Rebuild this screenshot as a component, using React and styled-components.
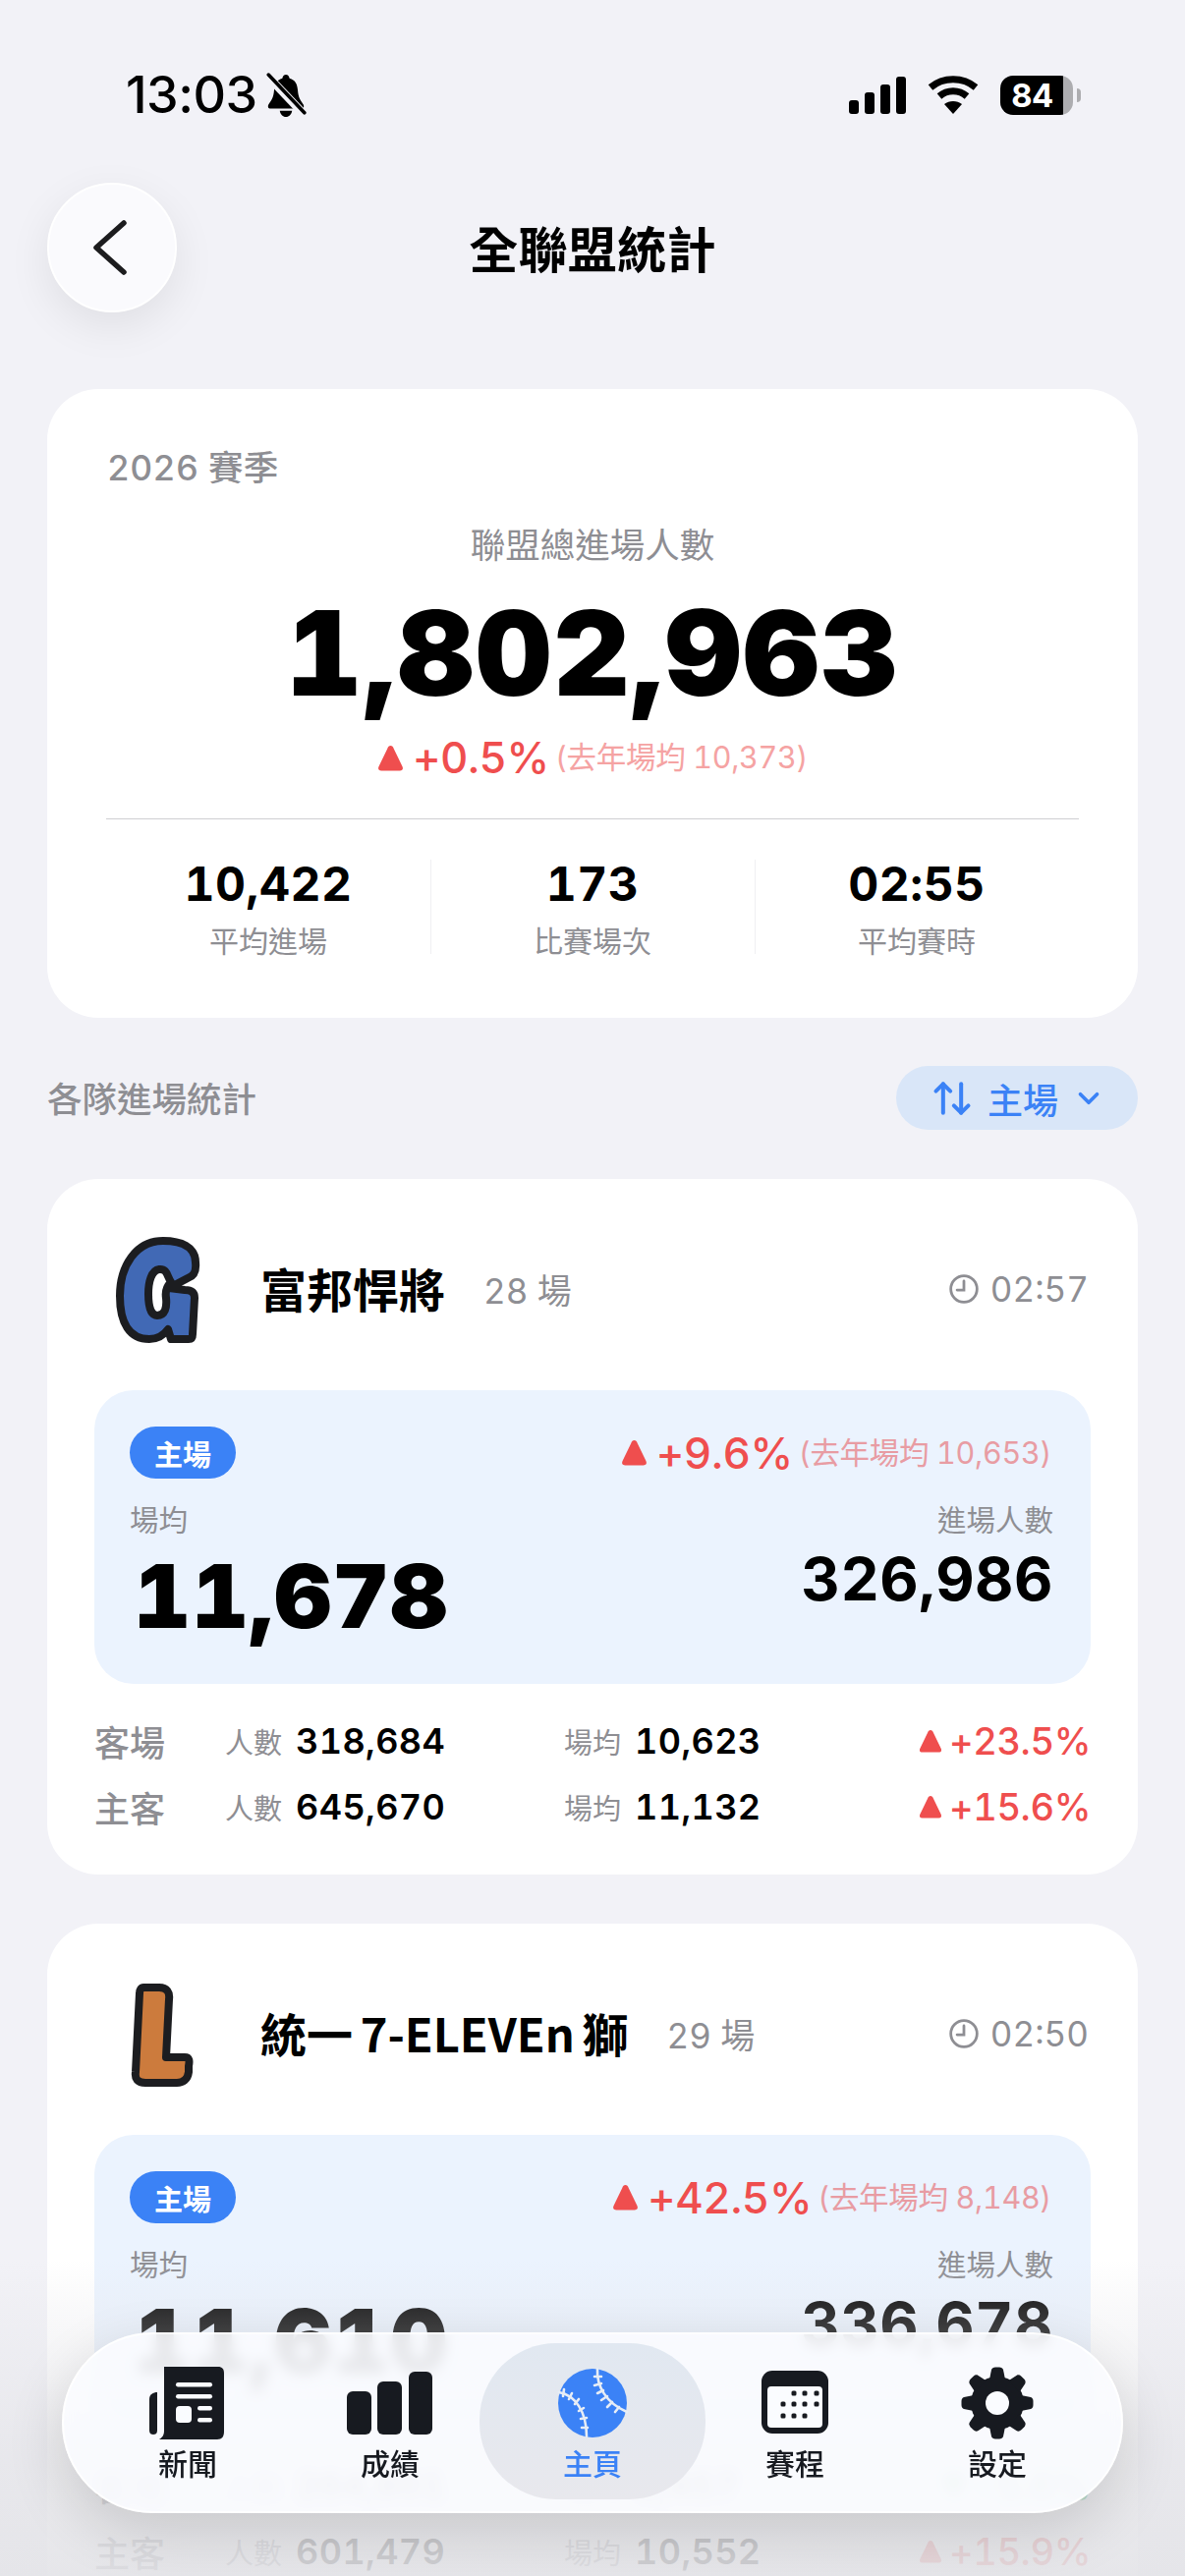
import React from "react";
import styled, { createGlobalStyle } from "styled-components";
import { ArrowUpDown, ChevronDown } from "lucide-react";

const FONT = `Inter, "Noto Sans CJK TC", "Noto Sans", sans-serif`;
const CJK = `"Noto Sans CJK TC", Inter, sans-serif`;
const GRAY = "#8e8e93";
const RED = "#ef4e4e";
const GREEN = "#34c759";
const DARK = "#171a20";
const BLUE = "#3b82f6";

const Global = createGlobalStyle`
  html, body { margin: 0; padding: 0; background: #f2f2f7; }
  * { box-sizing: border-box; }
`;

const Page = styled.div`
  position: relative;
  width: 1206px;
  height: 2622px;
  overflow: hidden;
  background: #f2f2f7;
  font-family: ${FONT};
  font-variant-numeric: tabular-nums;
  color: #000;
`;
const Scroll = styled.div`
  padding: 0 48px;
`;
const StatusBar = styled.div`
  height: 74px;
  margin: 60px 0 52px;
  padding: 0 58px 0 80px;
  display: flex;
  align-items: center;
  justify-content: space-between;
`;
const Cluster = styled.div`
  display: flex;
  align-items: center;
  gap: ${(p) => p.$gap}px;
`;
const Clock = styled.span`
  font-size: 52px;
  font-weight: 500;
  font-variant-numeric: normal;
  line-height: 74px;
  letter-spacing: -0.5px;
`;
const Battery = styled.div`
  position: relative;
  width: 74px;
  height: 40px;
  border-radius: 13px;
  background: linear-gradient(90deg, #000 0 86%, #adadb0 86% 100%);
  display: flex;
  align-items: center;
  justify-content: center;
  padding-right: 9px;
  color: #fff;
  font-size: 33px;
  font-weight: 700;
  margin-right: 8px;
  &::after {
    content: "";
    position: absolute;
    right: -8px;
    top: 13px;
    width: 4px;
    height: 14px;
    border-radius: 0 4px 4px 0;
    background: #adadb0;
  }
`;
const Header = styled.header`
  display: grid;
  grid-template-columns: 132px 1fr 132px;
  align-items: center;
  height: 132px;
  margin-bottom: 78px;
`;
const BackButton = styled.button`
  width: 132px;
  height: 132px;
  border-radius: 50%;
  border: 2px solid #fff;
  background: #fafafd;
  box-shadow: 0 14px 44px rgba(0, 0, 0, 0.08);
  display: flex;
  align-items: center;
  justify-content: center;
  padding: 0 4px 0 0;
`;
const Title = styled.h1`
  margin: -2px 0 0;
  text-align: center;
  font-family: ${CJK};
  font-size: 50px;
  font-weight: 700;
  line-height: 60px;
  letter-spacing: 0.3px;
`;
const Card = styled.section`
  background: #fff;
  border-radius: 52px;
`;
const SummaryCard = styled(Card)`
  height: 640px;
  padding: 60px 60px 0;
`;
const Season = styled.div`
  font-size: 35.5px;
  font-weight: 500;
  line-height: 42px;
  color: ${GRAY};
  padding-left: 1px;
  letter-spacing: 0.3px;
`;
const HeroLabel = styled.div`
  margin-top: 37px;
  text-align: center;
  font-size: 35.5px;
  line-height: 42px;
  color: ${GRAY};
`;
const HeroNumber = styled.div`
  margin-top: 28px;
  text-align: center;
  font-size: 120px;
  font-weight: 900;
  line-height: 120px;
  letter-spacing: 2px;
`;
const DeltaLine = styled.div`
  display: flex;
  align-items: center;
  justify-content: ${(p) => p.$align || "center"};
  gap: ${(p) => p.$gap ?? 6}px;
  line-height: 50px;
`;
const HeroDelta = styled(DeltaLine)`
  margin-top: 21px;
`;
const Change = styled.span`
  font-size: ${(p) => p.$size}px;
  font-weight: 500;
  color: ${(p) => p.$color || RED};
  margin-left: 3px;
  letter-spacing: -0.4px;
`;
const LastYear = styled.span`
  font-size: 30.5px;
  letter-spacing: -0.3px;
  color: ${(p) => p.$color};
`;
const Divider = styled.div`
  height: 1px;
  margin-top: 37px;
  background: #cfcfd2;
`;
const Stats = styled.div`
  margin-top: 38px;
  display: grid;
  grid-template-columns: repeat(3, 1fr);
`;
const Stat = styled.div`
  text-align: center;
  position: relative;
  & + &::before {
    content: "";
    position: absolute;
    left: 0;
    top: 3px;
    height: 96px;
    width: 1px;
    background: #f0f0f2;
  }
`;
const StatValue = styled.div`
  font-size: 48px;
  font-weight: 700;
  line-height: 56px;
  letter-spacing: 0.5px;
`;
const StatLabel = styled.div`
  margin-top: 8px;
  font-size: 30px;
  line-height: 44px;
  color: ${GRAY};
`;
const SectionHead = styled.div`
  margin: 49px 0 50px;
  height: 65px;
  display: flex;
  align-items: center;
  justify-content: space-between;
`;
const SectionTitle = styled.h2`
  margin: -2px 0 0;
  font-size: 35.5px;
  font-weight: 500;
  color: ${GRAY};
`;
const SortPill = styled.button`
  width: 246px;
  height: 65px;
  border: 0;
  border-radius: 33px;
  background: #d9e6f8;
  color: ${BLUE};
  font-family: ${CJK};
  font-size: 36px;
  font-weight: 500;
  display: flex;
  align-items: center;
  justify-content: center;
  gap: 14px;
  padding: 0 0 0 2px;
`;
const TeamCard = styled(Card)`
  padding: 0 48px 36px;
  margin-bottom: 50px;
`;
const TeamHead = styled.div`
  margin: 0 0 44px;
  padding-top: 55px;
  height: 171px;
  display: flex;
  align-items: center;
`;
const Logo = styled.svg`
  width: 169px;
  height: 116px;
  flex: none;
`;
const TeamName = styled.div`
  font-family: ${CJK};
  font-size: 47px;
  font-weight: 700;
  word-spacing: -3px;
  margin-top: -5px;
`;
const Games = styled.div`
  margin: -3px 0 0 39px;
  font-size: 35px;
  color: ${GRAY};
`;
const Duration = styled.div`
  margin: -3px 0 0 auto;
  display: flex;
  align-items: center;
  gap: 11px;
  font-size: 35px;
  color: ${GRAY};
  padding-right: 2px;
`;
const HomeBox = styled.div`
  height: 299px;
  padding: 37px 40px 0 36px;
  border-radius: 40px;
  background: #ebf3fe;
`;
const BoxTop = styled.div`
  height: 53px;
  display: flex;
  align-items: center;
  justify-content: space-between;
`;
const Badge = styled.span`
  width: 108px;
  height: 53px;
  border-radius: 27px;
  background: ${BLUE};
  color: #fff;
  font-family: ${CJK};
  font-size: 29px;
  font-weight: 700;
  display: flex;
  align-items: center;
  justify-content: center;
`;
const BoxBody = styled.div`
  margin: 22px -2px 0 0;
  display: flex;
  justify-content: space-between;
`;
const BoxCol = styled.div`
  text-align: ${(p) => p.$align};
`;
const BoxLabel = styled.div`
  font-size: 29.5px;
  line-height: 40px;
  color: ${GRAY};
`;
const BigNumber = styled.div`
  margin: 13px 0 0 4px;
  font-size: 90px;
  font-weight: 900;
  line-height: 90px;
  letter-spacing: 1px;
`;
const SideNumber = styled.div`
  margin-top: 9px;
  font-size: 61px;
  font-weight: 700;
  line-height: 62px;
  letter-spacing: 0.5px;
`;
const Rows = styled.div`
  margin-top: 24px;
`;
const SplitRow = styled.div`
  height: 67px;
  display: grid;
  grid-template-columns: 133px 345px 1fr auto;
  align-items: center;
`;
const RowName = styled.span`
  font-size: 36px;
  font-weight: 500;
  color: ${GRAY};
`;
const Metric = styled.span`
  display: flex;
  align-items: center;
  gap: 14px;
`;
const MetricLabel = styled.span`
  font-size: 29px;
  color: ${GRAY};
`;
const MetricValue = styled.span`
  font-size: 36px;
  font-weight: 600;
  letter-spacing: 0.4px;
`;
const Fade = styled.div`
  position: absolute;
  left: 0;
  right: 0;
  bottom: 0;
  height: 322px;
  pointer-events: none;
  background: linear-gradient(
    180deg,
    rgba(228, 228, 232, 0) 0%,
    rgba(228, 228, 232, 0.2) 15%,
    rgba(228, 228, 232, 0.7) 60%,
    rgba(228, 228, 232, 0.88) 90%,
    rgba(228, 228, 232, 0.92) 100%
  );
`;
const Nav = styled.nav`
  position: absolute;
  left: 63px;
  top: 2374px;
  width: 1080px;
  height: 184px;
  padding: 11px 23px 12px;
  border-radius: 92px;
  border: 2px solid rgba(255, 255, 255, 0.9);
  background: rgba(250, 252, 255, 0.88);
  backdrop-filter: blur(7px);
  box-shadow: 0 20px 60px rgba(0, 0, 0, 0.14);
  display: grid;
  grid-template-columns: repeat(5, 1fr);
`;
const NavItem = styled.div`
  position: relative;
  padding-top: 21px;
  display: flex;
  flex-direction: column;
  align-items: center;
  color: ${(p) => (p.$active ? BLUE : DARK)};
  ${(p) =>
    p.$active &&
    `&::before {
      content: "";
      position: absolute;
      inset: -2px -12px 0;
      border-radius: 78px;
      background: linear-gradient(180deg, #e1e8f1, #e8e8ed);
    }`}
`;
const NavIcon = styled.svg`
  position: relative;
  height: 76px;
  width: 100px;
`;
const NavLabel = styled.span`
  position: relative;
  margin-top: 2px;
  font-family: ${CJK};
  font-size: 30px;
  font-weight: 500;
  line-height: 40px;
`;

const Triangle = ({ size }) => (
  <svg width={size} height={size} viewBox="0 0 26 26" style={{ flex: "none" }}>
    <path d="M13 1C14.5 1 15.5 2 16.2 4L24.6 21.5C25.6 24 24.6 25.5 22 25.5H4C1.4 25.5.4 24 1.4 21.5L9.8 4C10.5 2 11.5 1 13 1Z" fill={RED} />
  </svg>
);
const DownTriangle = ({ size }) => (
  <svg width={size} height={size} viewBox="0 0 26 26" style={{ flex: "none" }}>
    <path d="M13 25C14.5 25 15.5 24 16.2 22L24.6 4.5C25.6 2 24.6.5 22 .5H4C1.4.5.4 2 1.4 4.5L9.8 22C10.5 24 11.5 25 13 25Z" fill={GREEN} />
  </svg>
);
const ClockIcon = () => (
  <svg width="32" height="32" viewBox="0 0 30 30" fill="none" stroke={GRAY} strokeWidth="2.6" strokeLinecap="round">
    <circle cx="15" cy="15" r="12.5" />
    <path d="M15 7.5V16H8.5" />
  </svg>
);

const GLogo = () => (
  <Logo viewBox="0 0 169 116">
    <path
      fillRule="evenodd"
      fill="#4169b5"
      stroke="#1c1d20"
      strokeWidth="8"
      strokeLinejoin="round"
      d="M103 30C103 14 88 8 70 8C42 8 26 34 26 64C26 92 36 108 56 108C64 108 70 105 75 98L78 108H96C99 108 100 106 100 103L102 66C102 60 98 58 92 58L76 56L95 46C101 44 104 40 103 30ZM66 37C58 38 55 50 55 62C55 76 58 84 64 84C72 84 74 76 73 66C72 60 74 54 78 50C74 44 74 36 66 37Z"
    />
  </Logo>
);
const LLogo = () => (
  <Logo viewBox="0 0 169 116">
    <path
      fill="#cc7b3d"
      stroke="#1c1d20"
      strokeWidth="8"
      strokeLinejoin="round"
      d="M50 10H66C74 10 77 15 76 22L73 81H92C97 81 97 85 96 90V96C95 104 90 107 84 107H52C44 107 41 103 42 96L46 16C46 12 48 10 50 10Z"
    />
  </Logo>
);

const NewsIcon = () => (
  <NavIcon viewBox="0 0 100 76">
    <path fill={DARK} d="M26 1H81C85 1 87 3 87 8V67C87 72 85 75 80 75H21C24 73 26 71 26 66V1Z" />
    <path fill={DARK} d="M11 34C11 29 15 27 19 27V66C19 69 17 70 15 70C13 70 11 69 11 66Z" />
    <g fill="#fafcff">
      <rect x="38" y="17" width="37" height="4.5" rx="2.2" />
      <rect x="38" y="29" width="37" height="4.5" rx="2.2" />
      <rect x="38" y="41" width="16" height="17" rx="4" />
      <rect x="60" y="41" width="15" height="4.5" rx="2.2" />
      <rect x="60" y="53" width="15" height="4.5" rx="2.2" />
    </g>
  </NavIcon>
);
const BarsIcon = () => (
  <NavIcon viewBox="0 0 100 76">
    <g fill={DARK}>
      <rect x="6" y="26" width="25" height="44" rx="6" />
      <rect x="37" y="16" width="25" height="54" rx="6" />
      <rect x="69" y="6" width="24" height="64" rx="6" />
    </g>
  </NavIcon>
);
const BallIcon = () => (
  <NavIcon viewBox="0 0 100 76">
    <circle cx="50" cy="38" r="35" fill={BLUE} />
    <g fill="none" stroke="#e6edf6" strokeWidth="2.6" strokeLinecap="round">
      <path d="M16 27C32 30 44 46 44 72" />
      <path d="M55 3C54 21 64 38 85 47" />
      <path d="M21 24L20 31M29 28L26 34M36 34L32 39M41 43L36 46M44 53L38 54M45 63L39 63" />
      <path d="M52 11L59 11M52 20L59 18M55 28L61 25M59 35L65 31M65 42L70 37M73 47L77 42" />
    </g>
  </NavIcon>
);
const CalendarIcon = () => (
  <NavIcon viewBox="0 0 100 76">
    <rect x="16" y="5" width="68" height="64" rx="11" fill={DARK} />
    <rect x="22" y="21" width="56" height="42" rx="4" fill="#fafcff" />
    <g fill={DARK}>
      {[
        [49, 28], [60, 28], [72, 28],
        [38, 39], [49, 39], [60, 39], [72, 39],
        [38, 51], [49, 51], [60, 51],
      ].map(([cx, cy]) => (
        <rect key={`${cx}-${cy}`} x={cx - 2.5} y={cy - 2.5} width="5" height="5" rx="1.5" />
      ))}
    </g>
  </NavIcon>
);
const GearIcon = () => (
  <NavIcon viewBox="0 0 100 76">
    <g fill={DARK}>
      <circle cx="50" cy="38" r="27" />
      {[0, 45, 90, 135, 180, 225, 270, 315].map((a) => (
        <path key={a} d="M42 14L44 4C44.5 2.5 46 1.5 48 1.5H52C54 1.5 55.5 2.5 56 4L58 14Z" transform={`rotate(${a} 50 38)`} />
      ))}
    </g>
    <circle cx="50" cy="38" r="12" fill="#fafcff" />
  </NavIcon>
);

const teams = [
  {
    id: "g", Logo: GLogo, name: "富邦悍將", games: "28 場", time: "02:57",
    change: "+9.6%", last: "(去年場均 10,653)", avg: "11,678", total: "326,986",
    rows: [
      { name: "客場", total: "318,684", avg: "10,623", change: "+23.5%" },
      { name: "主客", total: "645,670", avg: "11,132", change: "+15.6%" },
    ],
  },
  {
    id: "l", Logo: LLogo, name: "統一 7-ELEVEn 獅", games: "29 場", time: "02:50",
    change: "+42.5%", last: "(去年場均 8,148)", avg: "11,610", total: "336,678",
    rows: [
      { name: "客場", total: "264,801", avg: "9,457", change: "-5.6%", down: true },
      { name: "主客", total: "601,479", avg: "10,552", change: "+15.9%" },
    ],
  },
];

const navItems = [
  { label: "新聞", Icon: NewsIcon },
  { label: "成績", Icon: BarsIcon },
  { label: "主頁", Icon: BallIcon, active: true },
  { label: "賽程", Icon: CalendarIcon },
  { label: "設定", Icon: GearIcon },
];

export default function App() {
  return (
    <Page>
      <Global />
      <Scroll>
        <StatusBar>
          <Cluster $gap={8}>
            <Clock>13:03</Clock>
            <svg width="42" height="46" viewBox="0 0 40 44">
              <path fill="#000" d="M20 2C22 2 23 3.5 23.5 5.5C29 7 31 11 31.5 17C32 24 34 27 37 31C38 33 37 35 35 35H5C3 35 2 33 3 31C6 27 8 24 8.5 17C9 11 11 7 16.5 5.5C17 3.5 18 2 20 2ZM14 37H26C25.5 40.5 23 43 20 43C17 43 14.5 40.5 14 37Z" />
              <path stroke="#f2f2f7" strokeWidth="8" d="M2 3L38 41" />
              <path stroke="#000" strokeWidth="3.4" strokeLinecap="round" d="M3 2L38 39" />
            </svg>
          </Cluster>
          <Cluster $gap={22}>
            <svg width="58" height="38" viewBox="0 0 58 38">
              <g fill="#000">
                <rect x="0" y="24" width="10" height="14" rx="3" />
                <rect x="16" y="16" width="10" height="22" rx="3" />
                <rect x="32" y="8" width="10" height="30" rx="3" />
                <rect x="48" y="0" width="10" height="38" rx="3" />
              </g>
            </svg>
            <svg width="52" height="40" viewBox="0 0 52 40" fill="none" stroke="#000" strokeWidth="7">
              <path d="M3 12C16 1 36 1 49 12" />
              <path d="M12 21C20 14 32 14 40 21" />
              <path fill="#000" stroke="none" d="M26 39L17 29C22 25 30 25 35 29Z" />
            </svg>
            <Battery>84</Battery>
          </Cluster>
        </StatusBar>
        <Header>
          <BackButton aria-label="返回">
            <svg width="36" height="56" viewBox="0 0 36 56" fill="none" stroke="#1c1c1e" strokeWidth="5.5" strokeLinecap="round" strokeLinejoin="round">
              <path d="M32 3L4 28L32 53" />
            </svg>
          </BackButton>
          <Title>全聯盟統計</Title>
          <span />
        </Header>
        <SummaryCard>
          <Season>2026 賽季</Season>
          <HeroLabel>聯盟總進場人數</HeroLabel>
          <HeroNumber>1,802,963</HeroNumber>
          <HeroDelta>
            <Triangle size={27} />
            <Change $size={44}>+0.5%</Change>
            <LastYear $color="#f5a3a3">(去年場均 10,373)</LastYear>
          </HeroDelta>
          <Divider />
          <Stats>
            <Stat>
              <StatValue>10,422</StatValue>
              <StatLabel>平均進場</StatLabel>
            </Stat>
            <Stat>
              <StatValue>173</StatValue>
              <StatLabel>比賽場次</StatLabel>
            </Stat>
            <Stat>
              <StatValue>02:55</StatValue>
              <StatLabel>平均賽時</StatLabel>
            </Stat>
          </Stats>
        </SummaryCard>
        <SectionHead>
          <SectionTitle>各隊進場統計</SectionTitle>
          <SortPill>
            <ArrowUpDown size={44} strokeWidth={2.2} />
            主場
            <ChevronDown size={34} strokeWidth={2.6} />
          </SortPill>
        </SectionHead>
        {teams.map((t) => (
          <TeamCard key={t.id}>
            <TeamHead>
              <t.Logo />
              <TeamName>{t.name}</TeamName>
              <Games>{t.games}</Games>
              <Duration>
                <ClockIcon />
                {t.time}
              </Duration>
            </TeamHead>
            <HomeBox>
              <BoxTop>
                <Badge>主場</Badge>
                <DeltaLine>
                  <Triangle size={27} />
                  <Change $size={44}>{t.change}</Change>
                  <LastYear $color="#e89ca3">{t.last}</LastYear>
                </DeltaLine>
              </BoxTop>
              <BoxBody>
                <BoxCol $align="left">
                  <BoxLabel>場均</BoxLabel>
                  <BigNumber>{t.avg}</BigNumber>
                </BoxCol>
                <BoxCol $align="right">
                  <BoxLabel>進場人數</BoxLabel>
                  <SideNumber>{t.total}</SideNumber>
                </BoxCol>
              </BoxBody>
            </HomeBox>
            <Rows>
              {t.rows.map((r) => (
                <SplitRow key={r.name}>
                  <RowName>{r.name}</RowName>
                  <Metric>
                    <MetricLabel>人數</MetricLabel>
                    <MetricValue>{r.total}</MetricValue>
                  </Metric>
                  <Metric>
                    <MetricLabel>場均</MetricLabel>
                    <MetricValue>{r.avg}</MetricValue>
                  </Metric>
                  <DeltaLine $gap={4}>
                    {r.down ? <DownTriangle size={24} /> : <Triangle size={24} />}
                    <Change $size={38} $color={r.down ? GREEN : RED}>{r.change}</Change>
                  </DeltaLine>
                </SplitRow>
              ))}
            </Rows>
          </TeamCard>
        ))}
      </Scroll>
      <Fade />
      <Nav>
        {navItems.map(({ label, Icon, active }) => (
          <NavItem key={label} $active={active}>
            <Icon />
            <NavLabel>{label}</NavLabel>
          </NavItem>
        ))}
      </Nav>
    </Page>
  );
}
